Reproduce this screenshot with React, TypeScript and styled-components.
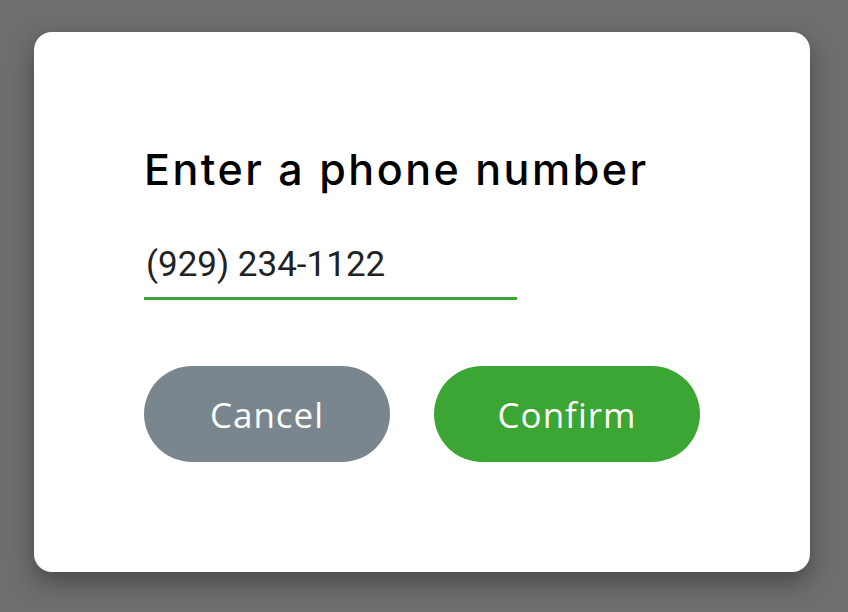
import React, { useState } from 'react'
import styled, { createGlobalStyle } from 'styled-components'

const GlobalStyle = createGlobalStyle`
  html, body {
    margin: 0;
    padding: 0;
    background: #6e6e6e;
  }
  #root {
    min-height: 612px;
  }
`

const Overlay = styled.div`
  height: 612px;
  padding: 32px 38px 40px 34px;
  box-sizing: border-box;
  background: #6e6e6e;
`

const Dialog = styled.div`
  height: 540px;
  background: #ffffff;
  border-radius: 18px;
  box-shadow: 0 10px 24px rgba(0, 0, 0, 0.35);
  padding: 110px 110px 0 110px;
  box-sizing: border-box;
`

const Title = styled.h2`
  margin: 0;
  font-family: Inter, 'Open Sans', sans-serif;
  font-weight: 500;
  font-size: 43px;
  letter-spacing: 2.5px;
  line-height: 54px;
  color: #000000;
`

const Field = styled.label`
  display: block;
  width: 373px;
  margin-top: 48px;
  border-bottom: 3px solid #3aa635;
`

const PhoneInput = styled.input`
  display: block;
  width: 100%;
  border: none;
  outline: none;
  padding: 0 0 11px 2px;
  margin: 0;
  background: transparent;
  font-family: Roboto, sans-serif;
  font-size: 35px;
  line-height: 42px;
  color: #222222;
  caret-color: #000000;
`

const Actions = styled.div`
  display: flex;
  gap: 44px;
  margin-top: 66px;
`

const Button = styled.button<{ $primary?: boolean; $width: number }>`
  width: ${(p) => p.$width}px;
  height: 96px;
  padding: 0;
  border: none;
  border-radius: 48px;
  background: ${(p) => (p.$primary ? '#3ba634' : '#7a868e')};
  color: #ffffff;
  font-family: 'Open Sans', sans-serif;
  font-size: 35px;
  letter-spacing: 1px;
  cursor: pointer;
`

export default function App() {
  const [phone, setPhone] = useState('(929) 234-1122')

  return (
    <>
      <GlobalStyle />
      <Overlay>
        <Dialog>
          <Title>Enter a phone number</Title>
          <Field>
            <PhoneInput value={phone} onChange={(e) => setPhone(e.target.value)} autoFocus />
          </Field>
          <Actions>
            <Button $width={246}>Cancel</Button>
            <Button $primary $width={266}>
              Confirm
            </Button>
          </Actions>
        </Dialog>
      </Overlay>
    </>
  )
}
